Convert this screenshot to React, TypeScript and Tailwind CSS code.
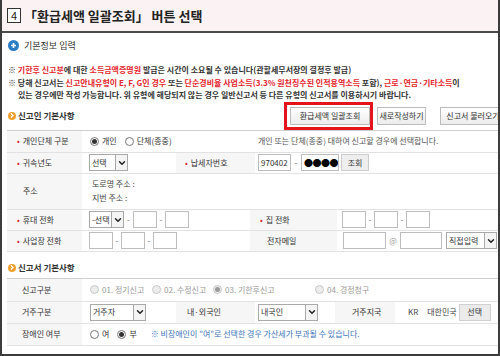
import { ChevronDown } from "lucide-react";

const Radio = ({ checked = false, disabled = false }: { checked?: boolean; disabled?: boolean }) => (
    <span
        className={
            "flex h-[9px] w-[9px] shrink-0 items-center justify-center rounded-full border " +
            (disabled ? "border-[#c8c8c8] bg-[#ececec]" : "border-[#777] bg-white")
        }
    >
        {checked && <span className={"h-[5px] w-[5px] rounded-full " + (disabled ? "bg-[#9a9a9a]" : "bg-[#333]")} />}
    </span>
);

const Select = ({ text, w }: { text: string; w: string }) => (
    <div className={"flex h-[17px] items-center border border-[#a9a9a9] bg-white " + w}>
        <span className="flex-1 whitespace-nowrap pl-[2px] leading-[12px] text-[#333]">{text}</span>
        <span className="flex h-full w-[12px] shrink-0 items-center justify-center border-l border-[#a9a9a9] bg-[#f4f4f4]">
            <ChevronDown size={10} strokeWidth={3.5} className="text-[#222]" />
        </span>
    </div>
);

const Input = ({ w, children }: { w: string; children?: React.ReactNode }) => (
    <div className={"flex h-[17px] items-center overflow-hidden border border-[#bdbdbd] bg-white px-[2px] text-[#333] " + w}>{children}</div>
);

const Dash = ({ w = "w-[8px]" }: { w?: string }) => <span className={"text-center text-[#666] " + w}>-</span>;

const Label = ({ children, bullet = false, w, pl }: { children: React.ReactNode; bullet?: boolean; w: string; pl: string }) => (
    <div className={"flex h-full shrink-0 items-center bg-[#f6f6f6] text-[#333] " + w + " " + pl}>
        {bullet && <span className="mr-[3px] text-[8px] text-[#d7262c]">•</span>}
        {children}
    </div>
);

const Row = ({ h, children }: { h: string; children: React.ReactNode }) => (
    <div className={"flex items-center border-b border-[#e2e2e2] " + h}>{children}</div>
);

const SectionTitle = ({ children }: { children: React.ReactNode }) => (
    <div className="flex items-center gap-[2px] text-[8.5px] font-bold text-[#333]">
        <span className="flex h-[8px] w-[8px] items-center justify-center rounded-full bg-[#f0a12f]">
            <svg width="4" height="5" viewBox="0 0 4 5">
                <path d="M1 0.5 L3 2.5 L1 4.5" stroke="white" strokeWidth="1.2" fill="none" />
            </svg>
        </span>
        {children}
    </div>
);

const Btn = ({ children, className = "" }: { children: React.ReactNode; className?: string }) => (
    <div
        className={
            "relative flex h-[18px] shrink-0 items-center justify-center whitespace-nowrap border border-[#bcbcbc] bg-gradient-to-b from-white to-[#ececec] text-[8px] text-[#333] " +
            className
        }
    >
        {children}
    </div>
);

const Red = ({ children }: { children: React.ReactNode }) => <span className="text-[#e3262d]">{children}</span>;

export default function App() {
    return (
        <div className="h-[356px] w-[500px] overflow-hidden border-x-2 border-b-2 border-[#3c3c3c] bg-white font-['Noto_Sans_CJK_KR','Noto_Sans',sans-serif] text-[8px] leading-none text-[#333]">
            {/* title */}
            <div className="flex h-[33px] items-center border-b-2 border-[#4a4a4a] bg-[#fbf3f3] pl-[5px]">
                <span className="flex h-[15px] w-[14px] items-center justify-center border border-[#333] bg-white text-[11px] text-[#222]">4</span>
                <span className="ml-[3px] text-[13px] font-bold text-[#222]">「환급세액 일괄조회」 버튼 선택</span>
            </div>

            <div className="pl-[5px]">
                {/* 기본정보 입력 */}
                <div className="mt-[5px] flex h-[14px] items-center gap-[5px] pl-[1px] text-[9px] text-[#333]">
                    <span className="flex h-[11px] w-[11px] items-center justify-center rounded-full bg-[#2a7cc4]">
                        <svg width="7" height="7" viewBox="0 0 7 7">
                            <path d="M3.5 1 V6 M1 3.5 H6" stroke="white" strokeWidth="1.6" />
                        </svg>
                    </span>
                    기본정보 입력
                </div>

                {/* notices */}
                <div className="mt-[12px] pl-[1px] text-[8px] font-bold leading-[12.5px] text-[#333]">
                    <div>
                        ※ <Red>기한후 신고분</Red>에 대한 <Red>소득금액증명원</Red> 발급은 시간이 소요될 수 있습니다(관할세무서장의 결정후 발급)
                    </div>
                    <div className="whitespace-nowrap">
                        ※ 당해 신고서는 <Red>신고안내유형이 E, F, G인 경우</Red> 또는 <Red>단순경비율 사업소득(3.3% 원천징수된 인적용역소득</Red> 포함),{" "}
                        <Red>근로·연금·기타소득</Red>이
                    </div>
                    <div className="pl-[10px]">
                        있는 경우에만 작성 가능합니다. 위 유형에 해당되지 않는 경우 일반신고서 등 다른 유형의 신고서를 이용하시기 바랍니다.
                    </div>
                </div>

                {/* 신고인 기본사항 */}
                <div className="mt-[5px] flex h-[18px] items-center">
                    <div className="w-[283px] shrink-0 pl-[1px]">
                        <SectionTitle>신고인 기본사항</SectionTitle>
                    </div>
                    <Btn className="w-[80px]">
                        환급세액 일괄조회
                        <span className="absolute left-[-7px] right-[-4px] top-[-6px] bottom-[-6px] border-[3px] border-[#e5141c]" />
                    </Btn>
                    <Btn className="ml-[7px] w-[49px]">새로작성하기</Btn>
                    <Btn className="ml-[14px] w-[66px]">신고서 불러오기</Btn>
                </div>

                {/* table 1 */}
                <div className="mt-[5px] border-t border-[#cfcfcf]">
                    <Row h="h-[22px]">
                        <Label bullet w="w-[75px]" pl="pl-[10px]">
                            개인단체 구분
                        </Label>
                        <div className="flex w-[176px] items-center pl-[8px]">
                            <Radio checked />
                            <span className="ml-[3px]">개인</span>
                            <span className="ml-[8px]">
                                <Radio />
                            </span>
                            <span className="ml-[3px]">단체(종중)</span>
                        </div>
                        <span className="text-[#555]">개인 또는 단체(종중) 대하여 신고할 경우에 선택합니다.</span>
                    </Row>
                    <Row h="h-[21px]">
                        <Label bullet w="w-[75px]" pl="pl-[10px]">
                            귀속년도
                        </Label>
                        <div className="flex w-[94px] items-center pl-[7px]">
                            <Select text="선택" w="w-[39px]" />
                        </div>
                        <Label bullet w="w-[79px]" pl="pl-[9px]">
                            납세자번호
                        </Label>
                        <div className="flex items-center pl-[3px]">
                            <Input w="w-[33px]">970402</Input>
                            <Dash w="w-[10px]" />
                            <Input w="w-[38px]">
                                <span className="whitespace-nowrap text-[9px] leading-[12px] tracking-[-0.5px] text-black">●●●●</span>
                            </Input>
                            <div className="ml-[2px] flex h-[17px] w-[28px] items-center justify-center border border-[#cdcdcd] bg-[#eeeeee] text-[#333]">
                                조회
                            </div>
                        </div>
                    </Row>
                    <Row h="h-[36px]">
                        <Label w="w-[75px]" pl="pl-[16px]">
                            주소
                        </Label>
                        <div className="flex flex-col gap-[6px] pl-[10px] text-[#444]">
                            <span>도로명 주소 :</span>
                            <span>지번 주소 :</span>
                        </div>
                    </Row>
                    <Row h="h-[21px]">
                        <Label bullet w="w-[75px]" pl="pl-[10px]">
                            휴대 전화
                        </Label>
                        <div className="flex w-[168px] items-center pl-[7px]">
                            <Select text="-선택" w="w-[35px]" />
                            <Dash w="w-[9px]" />
                            <Input w="w-[24px]" />
                            <Dash />
                            <Input w="w-[24px]" />
                        </div>
                        <Label bullet w="w-[87px]" pl="pl-[10px]">
                            집 전화
                        </Label>
                        <div className="flex items-center pl-[5px]">
                            <Input w="w-[24px]" />
                            <Dash />
                            <Input w="w-[24px]" />
                            <Dash />
                            <Input w="w-[24px]" />
                        </div>
                    </Row>
                    <Row h="h-[21px]">
                        <Label bullet w="w-[75px]" pl="pl-[10px]">
                            사업장 전화
                        </Label>
                        <div className="flex w-[168px] items-center pl-[7px]">
                            <Input w="w-[24px]" />
                            <Dash />
                            <Input w="w-[24px]" />
                            <Dash />
                            <Input w="w-[24px]" />
                        </div>
                        <Label w="w-[87px]" pl="pl-[17px]">
                            전자메일
                        </Label>
                        <div className="flex items-center pl-[6px]">
                            <Input w="w-[43px]" />
                            <span className="w-[14px] text-center text-[#999]">@</span>
                            <Input w="w-[42px]" />
                            <span className="ml-[4px]">
                                <Select text="직접입력" w="w-[51px]" />
                            </span>
                        </div>
                    </Row>
                </div>

                {/* 신고서 기본사항 */}
                <div className="mt-[9px] flex h-[14px] items-center pl-[1px]">
                    <SectionTitle>신고서 기본사항</SectionTitle>
                </div>

                <div className="mt-[3px] border-t border-[#cfcfcf]">
                    <Row h="h-[23px]">
                        <Label w="w-[75px]" pl="pl-[15px]">
                            신고구분
                        </Label>
                        <div className="flex items-center pl-[8px] text-[#9a9a9a]">
                            <Radio disabled />
                            <span className="ml-[3px] w-[50px]">01. 정기신고</span>
                            <Radio disabled />
                            <span className="ml-[3px] w-[49px]">02. 수정신고</span>
                            <Radio disabled checked />
                            <span className="ml-[3px] w-[90px]">03. 기한후신고</span>
                            <Radio disabled />
                            <span className="ml-[3px]">04. 경정청구</span>
                        </div>
                    </Row>
                    <Row h="h-[22px]">
                        <Label w="w-[75px]" pl="pl-[15px]">
                            거주구분
                        </Label>
                        <div className="flex w-[94px] items-center pl-[8px]">
                            <Select text="거주자" w="w-[56px]" />
                        </div>
                        <Label w="w-[79px]" pl="pl-[11px]">
                            내·외국인
                        </Label>
                        <div className="flex w-[80px] items-center pl-[3px]">
                            <Select text="내국인" w="w-[60px]" />
                        </div>
                        <Label w="w-[60px]" pl="pl-[17px]">
                            거주지국
                        </Label>
                        <div className="flex items-center pl-[13px] text-[#444]">
                            <span>KR</span>
                            <span className="ml-[9px]">대한민국</span>
                            <div className="ml-[2px] flex h-[17px] w-[32px] items-center justify-center border border-[#d0d0d0] bg-[#ebebeb] text-[#333]">
                                선택
                            </div>
                        </div>
                    </Row>
                    <Row h="h-[22px]">
                        <Label w="w-[75px]" pl="pl-[15px]">
                            장애인 여부
                        </Label>
                        <div className="flex items-center pl-[8px]">
                            <Radio />
                            <span className="ml-[3px]">여</span>
                            <span className="ml-[8px]">
                                <Radio checked />
                            </span>
                            <span className="ml-[3px]">부</span>
                            <span className="ml-[14px] text-[#3a73b9]">※ 비장애인이 "여"로 선택한 경우 가산세가 부과될 수 있습니다.</span>
                        </div>
                    </Row>
                </div>
            </div>
        </div>
    );
}
